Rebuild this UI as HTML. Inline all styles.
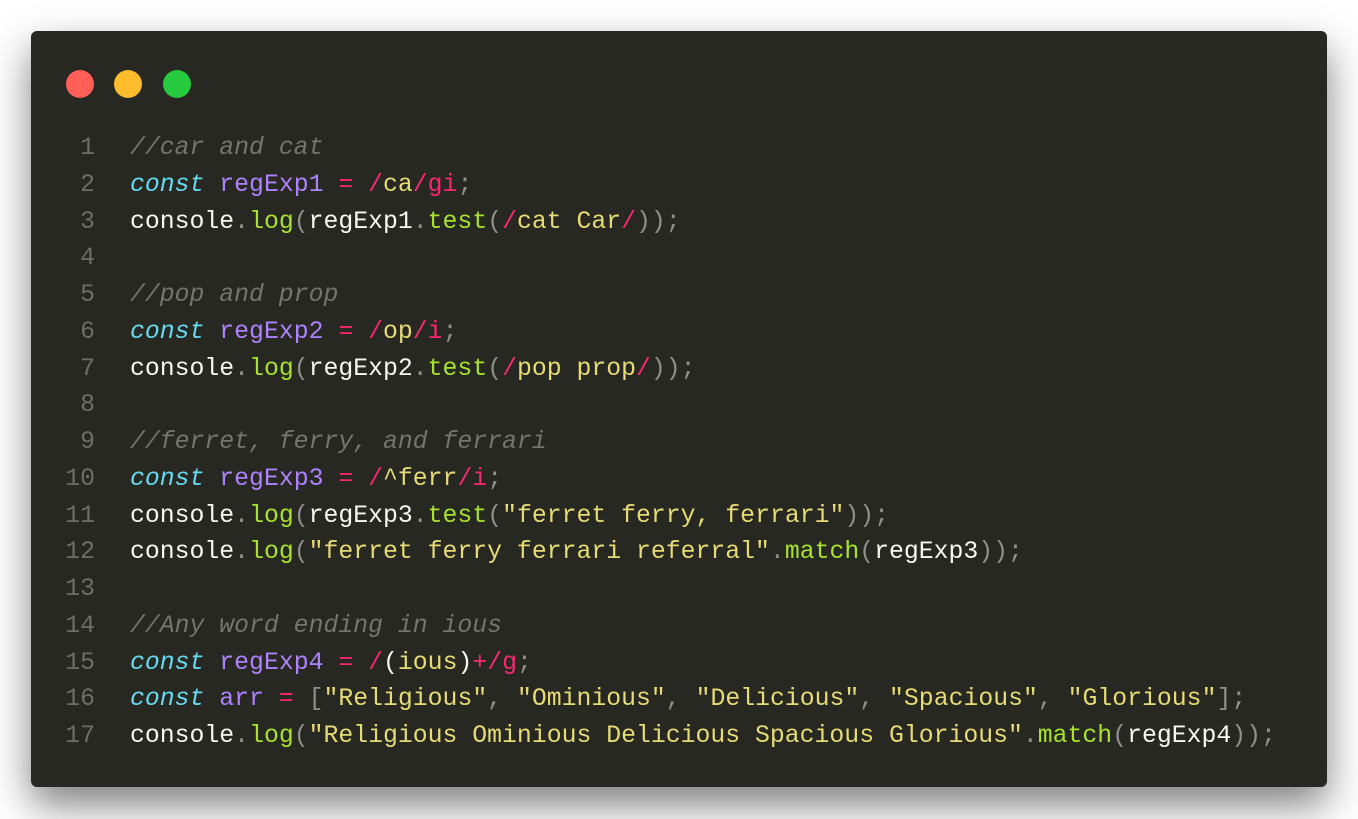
<!DOCTYPE html>
<html><head><meta charset="utf-8"><style>
html,body{margin:0;padding:0;background:#fff;width:1358px;height:819px;overflow:hidden}
.win{position:absolute;left:31px;top:31px;width:1296px;height:756px;background:#272822;border-radius:6px;box-shadow:0 18px 40px rgba(0,0,0,0.5)}
.dot{position:absolute;top:39px;width:28px;height:28px;border-radius:50%}
.code{position:absolute;left:0;top:99px;font-family:"Liberation Mono",monospace;font-size:24.8px;line-height:36.75px;white-space:pre;color:#f8f8f2}
.ln{display:inline-block;width:64px;text-align:right;color:#6e6e69;margin-right:35px}
.c{color:#75756e;font-style:italic}.k{color:#66d9ef;font-style:italic}.v{color:#ae81ff}.o{color:#f92672}.s{color:#e6db74}.f{color:#a6e22e}.p{color:#8f908a}
</style></head><body>
<div class="win">
<div class="dot" style="left:35px;background:#ff5f56"></div>
<div class="dot" style="left:83px;background:#ffbd2e"></div>
<div class="dot" style="left:132px;background:#27c93f"></div>
<div class="code"><div><span class="ln">1</span><span class="c">//car and cat</span></div><div><span class="ln">2</span><span class="k">const</span> <span class="v">regExp1</span> <span class="o">=</span> <span class="o">/</span><span class="s">ca</span><span class="o">/gi</span><span class="p">;</span></div><div><span class="ln">3</span>console<span class="p">.</span><span class="f">log</span><span class="p">(</span>regExp1<span class="p">.</span><span class="f">test</span><span class="p">(</span><span class="o">/</span><span class="s">cat Car</span><span class="o">/</span><span class="p">));</span></div><div><span class="ln">4</span></div><div><span class="ln">5</span><span class="c">//pop and prop</span></div><div><span class="ln">6</span><span class="k">const</span> <span class="v">regExp2</span> <span class="o">=</span> <span class="o">/</span><span class="s">op</span><span class="o">/i</span><span class="p">;</span></div><div><span class="ln">7</span>console<span class="p">.</span><span class="f">log</span><span class="p">(</span>regExp2<span class="p">.</span><span class="f">test</span><span class="p">(</span><span class="o">/</span><span class="s">pop prop</span><span class="o">/</span><span class="p">));</span></div><div><span class="ln">8</span></div><div><span class="ln">9</span><span class="c">//ferret, ferry, and ferrari</span></div><div><span class="ln">10</span><span class="k">const</span> <span class="v">regExp3</span> <span class="o">=</span> <span class="o">/</span><span class="s">^ferr</span><span class="o">/i</span><span class="p">;</span></div><div><span class="ln">11</span>console<span class="p">.</span><span class="f">log</span><span class="p">(</span>regExp3<span class="p">.</span><span class="f">test</span><span class="p">(</span><span class="s">"ferret ferry, ferrari"</span><span class="p">));</span></div><div><span class="ln">12</span>console<span class="p">.</span><span class="f">log</span><span class="p">(</span><span class="s">"ferret ferry ferrari referral"</span><span class="p">.</span><span class="f">match</span><span class="p">(</span>regExp3<span class="p">));</span></div><div><span class="ln">13</span></div><div><span class="ln">14</span><span class="c">//Any word ending in ious</span></div><div><span class="ln">15</span><span class="k">const</span> <span class="v">regExp4</span> <span class="o">=</span> <span class="o">/</span>(<span class="s">ious</span>)<span class="o">+/g</span><span class="p">;</span></div><div><span class="ln">16</span><span class="k">const</span> <span class="v">arr</span> <span class="o">=</span> <span class="p">[</span><span class="s">"Religious"</span><span class="p">,</span> <span class="s">"Ominious"</span><span class="p">,</span> <span class="s">"Delicious"</span><span class="p">,</span> <span class="s">"Spacious"</span><span class="p">,</span> <span class="s">"Glorious"</span><span class="p">];</span></div><div><span class="ln">17</span>console<span class="p">.</span><span class="f">log</span><span class="p">(</span><span class="s">"Religious Ominious Delicious Spacious Glorious"</span><span class="p">.</span><span class="f">match</span><span class="p">(</span>regExp4<span class="p">));</span></div></div>
</div>
</body></html>
